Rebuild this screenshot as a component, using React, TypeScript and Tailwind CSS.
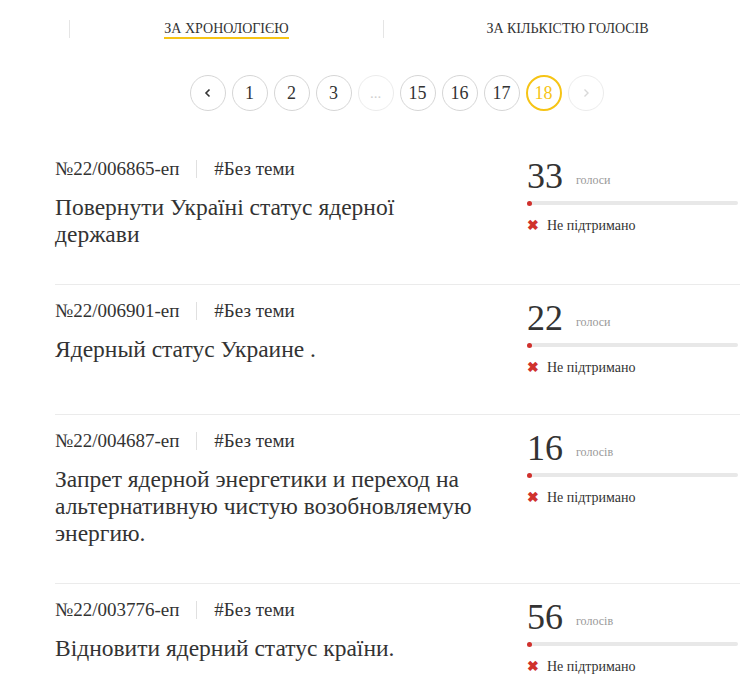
import React from 'react';

interface Petition {
    id: string;
    number: string;
    tag: string;
    title: string;
    votes: number;
    votesLabel: string;
}

const petitions: Petition[] = [
    { id: '1', number: '№22/006865-еп', tag: '#Без теми', title: 'Повернути Україні статус ядерної держави', votes: 33, votesLabel: 'голоси' },
    { id: '2', number: '№22/006901-еп', tag: '#Без теми', title: 'Ядерный статус Украине .', votes: 22, votesLabel: 'голоси' },
    { id: '3', number: '№22/004687-еп', tag: '#Без теми', title: 'Запрет ядерной энергетики и переход на альтернативную чистую возобновляемую энергию.', votes: 16, votesLabel: 'голосів' },
    { id: '4', number: '№22/003776-еп', tag: '#Без теми', title: 'Відновити ядерний статус країни.', votes: 56, votesLabel: 'голосів' },
];

const pages = ['1', '2', '3', '...', '15', '16', '17', '18'];

const serif = { fontFamily: '"Liberation Serif", "DejaVu Serif", serif' };

const App: React.FC = () => {
    return (
        <div className="w-[740px] min-h-[699px] bg-white text-[#333] overflow-hidden" style={serif}>
            {/* tabs */}
            <div className="flex pt-5 pl-[69px]">
                <div className="w-[314px] shrink-0 h-[18px] border-l border-[#e5e5e5] flex justify-center">
                    <span className="text-[14px] leading-[18px] uppercase border-b-2 border-[#f6c415] h-[19px]">
                        За хронологією
                    </span>
                </div>
                <div className="w-[368px] shrink-0 h-[18px] border-l border-[#e5e5e5] flex justify-center">
                    <span className="text-[14px] leading-[18px] uppercase">За кількістю голосів</span>
                </div>
            </div>

            {/* pagination */}
            <div className="flex justify-center gap-[6px] mt-[37px] pl-[53px]">
                <button className="w-9 h-9 rounded-full border border-[#d6d6d6] flex items-center justify-center">
                    <svg width="12" height="12" viewBox="0 0 12 12" fill="none" stroke="#333" strokeWidth="1.6">
                        <path d="M7.5 2.5 L4 6 L7.5 9.5" />
                    </svg>
                </button>
                {pages.map((p) => (
                    <button
                        key={p}
                        className={
                            p === '18'
                                ? 'w-9 h-9 rounded-full border-2 border-[#f6c415] text-[#f6c415] text-[18px] flex items-center justify-center'
                                : p === '...'
                                ? 'w-9 h-9 rounded-full border border-[#ececec] text-[#d0d0d0] text-[15px] flex items-center justify-center'
                                : 'w-9 h-9 rounded-full border border-[#d6d6d6] text-[18px] flex items-center justify-center'
                        }
                    >
                        {p}
                    </button>
                ))}
                <button className="w-9 h-9 rounded-full border border-[#ececec] flex items-center justify-center">
                    <svg width="12" height="12" viewBox="0 0 12 12" fill="none" stroke="#d8d8d8" strokeWidth="1.4">
                        <path d="M4.5 2.5 L8 6 L4.5 9.5" />
                    </svg>
                </button>
            </div>

            {/* list */}
            <div className="ml-[55px] mt-[32px]">
                {petitions.map((item, i) => (
                    <div
                        key={item.id}
                        className={`flex pt-[13px] pb-[36px] ${i > 0 ? 'border-t border-[#ebebeb]' : ''}`}
                    >
                        <div className="w-[424px] shrink-0">
                            <div className="flex items-center text-[19px] leading-[26px]">
                                <span>{item.number}</span>
                                <span className="mx-[17px] h-[18px] w-px bg-[#e0e0e0]" />
                                <span>{item.tag}</span>
                            </div>
                            <h3 className="mt-[12px] text-[23.5px] leading-[27px] font-normal">{item.title}</h3>
                        </div>
                        <div className="ml-[48px] w-[211px] shrink-0">
                            <div className="flex items-end h-[40px] pt-[2px]">
                                <span className="text-[36px] leading-[40px]">{item.votes}</span>
                                <span className="ml-[13px] mb-[9px] text-[12px] leading-[14px] text-[#999]">{item.votesLabel}</span>
                            </div>
                            <div className="relative mt-[5px] h-[4px] bg-[#e8e8e8] rounded-full">
                                <div className="absolute left-0 top-[-0.5px] w-[5px] h-[5px] rounded-full bg-[#d0312d]" />
                            </div>
                            <div className="flex items-center mt-[11px] text-[14px] leading-[20px]">
                                <span className="text-[#d0312d] text-[14px] font-bold mr-[8px]">✖</span>
                                <span>Не підтримано</span>
                            </div>
                        </div>
                    </div>
                ))}
            </div>
        </div>
    );
};

export default App;
